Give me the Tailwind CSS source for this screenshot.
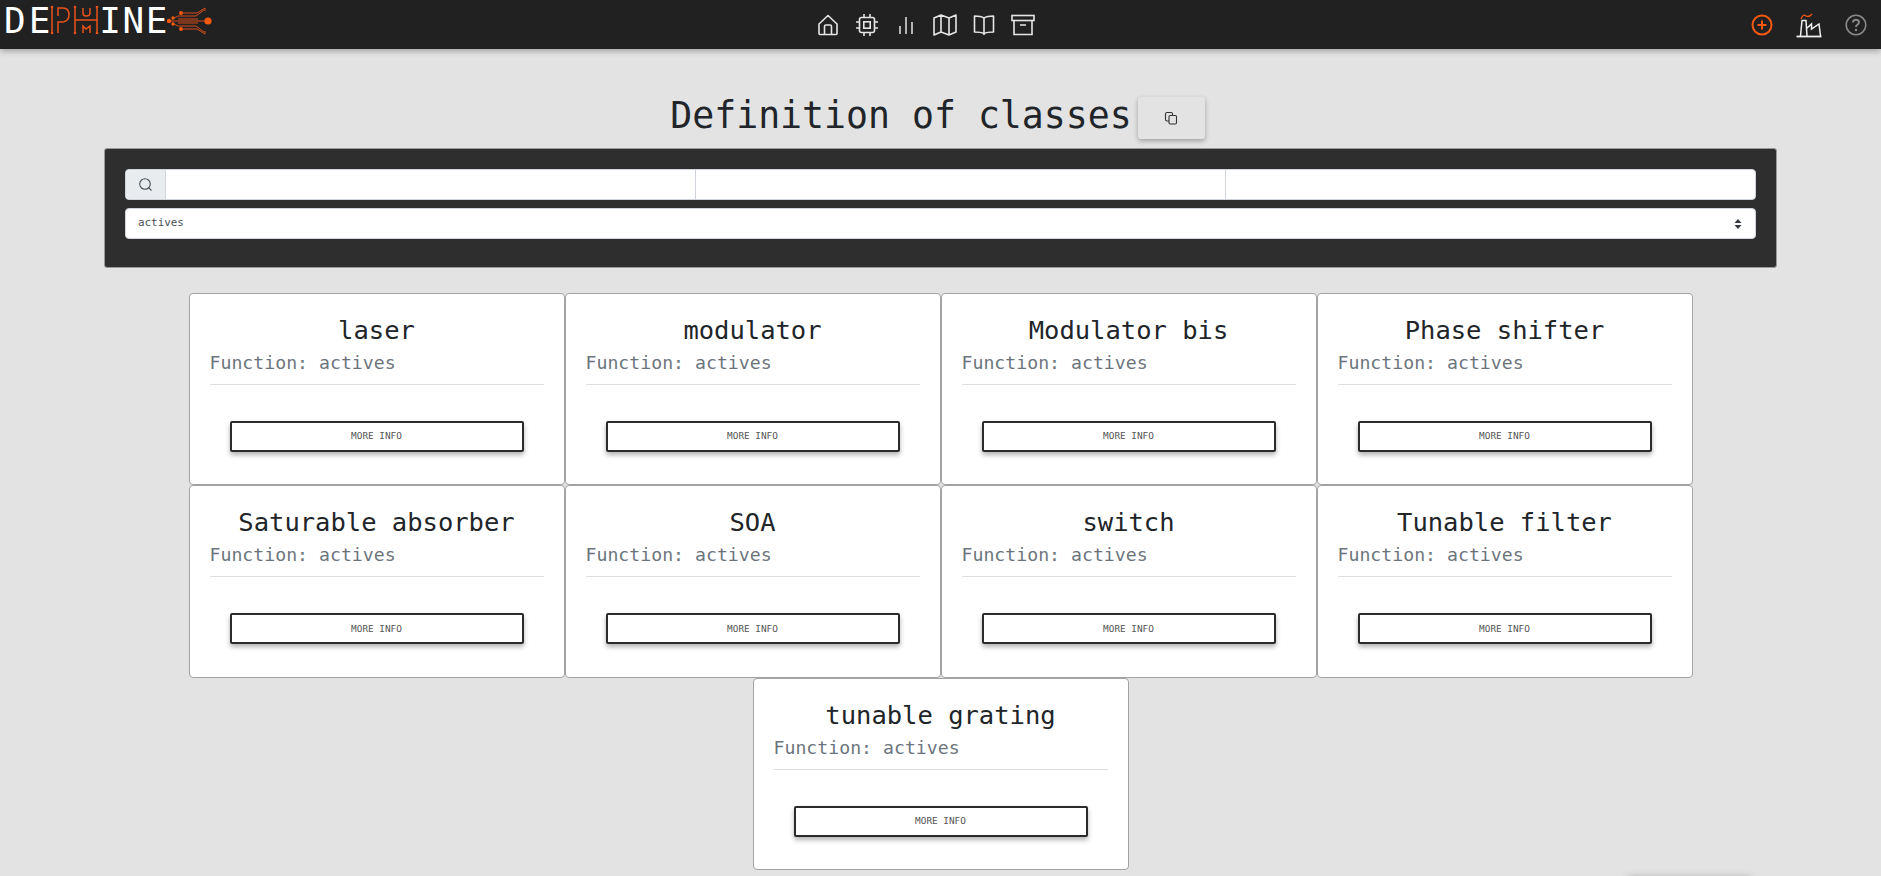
<!DOCTYPE html>
<html lang="en">
<head>
    <meta charset="UTF-8">
    <meta name="viewport" content="width=device-width, initial-scale=1.0">
    <title>Definition of classes</title>
    <script src="https://cdn.jsdelivr.net/npm/@tailwindcss/browser@4"></script>
</head>
<body class="bg-[#e3e3e3] font-['DejaVu_Sans_Mono',monospace] text-[#212529]">
<div class="relative h-[876px] overflow-hidden">
    <!-- top bar -->
    <header class="relative z-10 flex h-[49px] items-center bg-[#212121] shadow-[0_2px_6px_rgba(0,0,0,0.3)]">
        <div class="flex h-full w-[808px] shrink-0 items-start">
            <svg class="absolute left-0 top-0" width="215" height="45" viewBox="0 0 215 45" fill="none" stroke="#e8521a" stroke-width="1.2">
                <!-- P H M mark -->
                <path d="M52 7V33M58 33V22H63Q69 21 69 15Q69 8 63 8H58V16M75 7V33M97 7V33M75 20H97M83 8V13Q83 16 86 16Q90 16 90 13V8M83 33V26L86 29L90 26V33" stroke-width="1.5"/>
                <g fill="#e8521a" stroke="none">
                    <circle cx="52" cy="7" r="1.3"/><circle cx="52" cy="33" r="1.3"/><circle cx="75" cy="7" r="1.3"/><circle cx="75" cy="33" r="1.3"/><circle cx="97" cy="7" r="1.3"/><circle cx="97" cy="33" r="1.3"/>
                </g>
                <!-- circuit -->
                <path d="M170 21H206M172 19L178 16H196L204 10M182 13H197L205 8V11M172 23L178 26H196L204 32M182 29H197L205 34V31M178 19H198M178 23H198" stroke-width="0.9"/>
                <g fill="#f4590f" stroke="none">
                    <circle cx="169" cy="21" r="2.2"/><circle cx="173" cy="18" r="1.7"/><circle cx="173" cy="24" r="1.7"/><circle cx="181" cy="13" r="2"/><circle cx="181" cy="29" r="2"/><circle cx="208" cy="21" r="3.6"/>
                </g>
            </svg>
            <span class="ml-[4px] mt-[-1px] text-[36px] leading-[43px] tracking-[3px] text-white">DE</span>
            <span class="ml-[46px] mt-[-1px] text-[36px] leading-[43px] tracking-[1.5px] text-white">INE</span>
        </div>
        <nav class="grid grid-cols-[repeat(6,39px)] items-center justify-items-center text-[#e6e6e6]">
            <svg width="20" height="22" viewBox="0 0 20 22" fill="none" stroke="currentColor" stroke-width="1.6" stroke-linejoin="round"><path d="M1 10L10 1.5L19 10V19.5Q19 20.5 18 20.5H2Q1 20.5 1 19.5ZM6.5 20.5V12.5Q6.5 11 8 11H12Q13.5 11 13.5 12.5V20.5"/></svg>
            <svg width="24" height="24" viewBox="0 0 24 24" fill="none" stroke="currentColor" stroke-width="1.6"><rect x="4.5" y="4.5" width="15" height="15" rx="2"/><rect x="8.8" y="8.8" width="6.4" height="6.4"/><path d="M9 1V4M15 1V4M9 20V23M15 20V23M1 9H4M1 15H4M20 9H23M20 15H23"/></svg>
            <svg width="16" height="20" viewBox="0 0 16 20" fill="none" stroke="#c4c4c4" stroke-width="1.8"><path d="M2 11V19M8 2V19M14 7V19"/></svg>
            <svg width="24" height="24" viewBox="0 0 24 24" fill="none" stroke="currentColor" stroke-width="1.6" stroke-linejoin="round"><path d="M1 5L8 2L16 5L23 2V19L16 22L8 19L1 22ZM8 2V19M16 5V22"/></svg>
            <svg width="22" height="22" viewBox="0 0 22 22" fill="none" stroke="currentColor" stroke-width="1.6" stroke-linejoin="round"><path d="M11 4Q8 2 1.5 2V18Q8 18 11 19.5Q14 18 20.5 18V2Q14 2 11 4ZM11 4V21"/></svg>
            <svg width="24" height="22" viewBox="0 0 24 22" fill="none" stroke="currentColor" stroke-width="1.6"><rect x="1" y="1.5" width="22" height="5"/><path d="M3 6.5V20.5H21V6.5M9 11H15" /></svg>
        </nav>
        <div class="ml-auto flex items-center gap-[23px] pr-[14px]">
            <svg width="22" height="22" viewBox="0 0 22 22" fill="none" stroke="#f4590f" stroke-width="2"><circle cx="11" cy="11" r="9.5"/><path d="M11 6.5V15.5M6.5 11H15.5"/></svg>
            <svg width="26" height="26" viewBox="0 0 26 26" fill="none" stroke="#efefef" stroke-width="1.5"><path d="M0.5 24.5H25.5" stroke-width="1.8"/><path d="M4.5 24L6 8.5H10L11 24M10 17L15.5 12V17L23 12L24.5 24"/><path d="M5 7Q7 1.5 10 4Q13 5.5 16 2" stroke="#f4590f" stroke-width="1.2"/></svg>
            <svg width="22" height="22" viewBox="0 0 22 22" fill="none" stroke="#8a8a8a" stroke-width="1.6"><circle cx="11" cy="11" r="9.8"/><path d="M8 8.5Q8 5.7 11 5.7Q14 5.7 14 8.3Q14 10 12.2 10.8Q11 11.4 11 13" stroke-width="1.9"/><circle cx="11" cy="16" r="1.2" fill="#8a8a8a" stroke="none"/></svg>
        </div>
    </header>

    <main class="flex flex-col items-center">
        <!-- heading -->
        <div class="mt-[48px] flex h-[42px] items-center gap-[6px] pr-[6px]">
            <h1 class="mt-[-5px] text-[36.5px] font-normal leading-[42px]">Definition of classes</h1>
            <button class="flex h-[42px] w-[67px] items-center justify-center rounded-[3px] bg-[#e3e3e3] shadow-[0_2px_5px_rgba(0,0,0,0.3)]">
                <svg width="14" height="14" viewBox="0 0 14 14" fill="none" stroke="#333" stroke-width="1.1"><rect x="5" y="4.5" width="7.5" height="8.5" rx="1.2"/><path d="M5 10H3Q1.5 10 1.5 8.5V3Q1.5 1.5 3 1.5H7Q8.5 1.5 8.5 3V4.5"/></svg>
            </button>
        </div>

        <!-- filters -->
        <section class="mt-[9px] h-[120px] w-[1673px] rounded-[3px] border border-[#9a9a9a] bg-[#2e2e2e] px-[20px] pt-[20px]">
            <div class="flex h-[31px] w-[1631px] overflow-hidden rounded-[4px] border border-[#ced4da] bg-white">
                <span class="flex w-[40px] shrink-0 items-center justify-center border-r border-[#ced4da] bg-[#e9ecef]">
                    <svg width="15" height="15" viewBox="0 0 15 15" fill="none" stroke="#495057" stroke-width="1.1"><circle cx="7" cy="7" r="5.3"/><path d="M10.8 10.8L13.5 13.5"/></svg>
                </span>
                <input type="text" class="w-[530px] border-r border-[#ced4da] outline-none">
                <input type="text" class="w-[530px] border-r border-[#ced4da] outline-none">
                <input type="text" class="min-w-0 flex-1 outline-none">
            </div>
            <div class="mt-[8px] flex h-[31px] w-[1631px] items-center justify-between rounded-[4px] border border-[#ced4da] bg-white pl-[12px] pr-[13px] text-[10.9px] text-[#495057]">
                <span>actives</span>
                <svg width="8" height="12" viewBox="0 0 8 12" fill="#343a40"><path d="M4 1L7.5 5H0.5ZM4 11L0.5 7H7.5Z"/></svg>
            </div>
        </section>

        <!-- class cards -->
        <div class="mt-[25px] flex w-[1504px] flex-wrap justify-center">

            <article class="h-[192.4px] w-[376px] rounded-[4px] border border-[#a3a3a3] bg-white px-[20px] pt-[19px]">
                <h2 class="text-center text-[25.5px] font-normal leading-[34px]">laser</h2>
                <p class="mt-[3px] h-[35px] border-b border-[#dedede] text-[18.2px] leading-[26px] text-[#6c757d]">Function: actives</p>
                <button class="mx-auto mt-[36px] flex h-[31px] w-[294px] items-center justify-center rounded-[2px] border-2 border-[#2b2b2b] bg-white text-[9.4px] text-[#555] shadow-[0_3px_5px_rgba(0,0,0,0.3)]">MORE INFO</button>
            </article>

            <article class="h-[192.4px] w-[376px] rounded-[4px] border border-[#a3a3a3] bg-white px-[20px] pt-[19px]">
                <h2 class="text-center text-[25.5px] font-normal leading-[34px]">modulator</h2>
                <p class="mt-[3px] h-[35px] border-b border-[#dedede] text-[18.2px] leading-[26px] text-[#6c757d]">Function: actives</p>
                <button class="mx-auto mt-[36px] flex h-[31px] w-[294px] items-center justify-center rounded-[2px] border-2 border-[#2b2b2b] bg-white text-[9.4px] text-[#555] shadow-[0_3px_5px_rgba(0,0,0,0.3)]">MORE INFO</button>
            </article>

            <article class="h-[192.4px] w-[376px] rounded-[4px] border border-[#a3a3a3] bg-white px-[20px] pt-[19px]">
                <h2 class="text-center text-[25.5px] font-normal leading-[34px]">Modulator bis</h2>
                <p class="mt-[3px] h-[35px] border-b border-[#dedede] text-[18.2px] leading-[26px] text-[#6c757d]">Function: actives</p>
                <button class="mx-auto mt-[36px] flex h-[31px] w-[294px] items-center justify-center rounded-[2px] border-2 border-[#2b2b2b] bg-white text-[9.4px] text-[#555] shadow-[0_3px_5px_rgba(0,0,0,0.3)]">MORE INFO</button>
            </article>

            <article class="h-[192.4px] w-[376px] rounded-[4px] border border-[#a3a3a3] bg-white px-[20px] pt-[19px]">
                <h2 class="text-center text-[25.5px] font-normal leading-[34px]">Phase shifter</h2>
                <p class="mt-[3px] h-[35px] border-b border-[#dedede] text-[18.2px] leading-[26px] text-[#6c757d]">Function: actives</p>
                <button class="mx-auto mt-[36px] flex h-[31px] w-[294px] items-center justify-center rounded-[2px] border-2 border-[#2b2b2b] bg-white text-[9.4px] text-[#555] shadow-[0_3px_5px_rgba(0,0,0,0.3)]">MORE INFO</button>
            </article>

            <article class="h-[192.4px] w-[376px] rounded-[4px] border border-[#a3a3a3] bg-white px-[20px] pt-[19px]">
                <h2 class="text-center text-[25.5px] font-normal leading-[34px]">Saturable absorber</h2>
                <p class="mt-[3px] h-[35px] border-b border-[#dedede] text-[18.2px] leading-[26px] text-[#6c757d]">Function: actives</p>
                <button class="mx-auto mt-[36px] flex h-[31px] w-[294px] items-center justify-center rounded-[2px] border-2 border-[#2b2b2b] bg-white text-[9.4px] text-[#555] shadow-[0_3px_5px_rgba(0,0,0,0.3)]">MORE INFO</button>
            </article>

            <article class="h-[192.4px] w-[376px] rounded-[4px] border border-[#a3a3a3] bg-white px-[20px] pt-[19px]">
                <h2 class="text-center text-[25.5px] font-normal leading-[34px]">SOA</h2>
                <p class="mt-[3px] h-[35px] border-b border-[#dedede] text-[18.2px] leading-[26px] text-[#6c757d]">Function: actives</p>
                <button class="mx-auto mt-[36px] flex h-[31px] w-[294px] items-center justify-center rounded-[2px] border-2 border-[#2b2b2b] bg-white text-[9.4px] text-[#555] shadow-[0_3px_5px_rgba(0,0,0,0.3)]">MORE INFO</button>
            </article>

            <article class="h-[192.4px] w-[376px] rounded-[4px] border border-[#a3a3a3] bg-white px-[20px] pt-[19px]">
                <h2 class="text-center text-[25.5px] font-normal leading-[34px]">switch</h2>
                <p class="mt-[3px] h-[35px] border-b border-[#dedede] text-[18.2px] leading-[26px] text-[#6c757d]">Function: actives</p>
                <button class="mx-auto mt-[36px] flex h-[31px] w-[294px] items-center justify-center rounded-[2px] border-2 border-[#2b2b2b] bg-white text-[9.4px] text-[#555] shadow-[0_3px_5px_rgba(0,0,0,0.3)]">MORE INFO</button>
            </article>

            <article class="h-[192.4px] w-[376px] rounded-[4px] border border-[#a3a3a3] bg-white px-[20px] pt-[19px]">
                <h2 class="text-center text-[25.5px] font-normal leading-[34px]">Tunable filter</h2>
                <p class="mt-[3px] h-[35px] border-b border-[#dedede] text-[18.2px] leading-[26px] text-[#6c757d]">Function: actives</p>
                <button class="mx-auto mt-[36px] flex h-[31px] w-[294px] items-center justify-center rounded-[2px] border-2 border-[#2b2b2b] bg-white text-[9.4px] text-[#555] shadow-[0_3px_5px_rgba(0,0,0,0.3)]">MORE INFO</button>
            </article>

            <article class="h-[192.4px] w-[376px] rounded-[4px] border border-[#a3a3a3] bg-white px-[20px] pt-[19px]">
                <h2 class="text-center text-[25.5px] font-normal leading-[34px]">tunable grating</h2>
                <p class="mt-[3px] h-[35px] border-b border-[#dedede] text-[18.2px] leading-[26px] text-[#6c757d]">Function: actives</p>
                <button class="mx-auto mt-[36px] flex h-[31px] w-[294px] items-center justify-center rounded-[2px] border-2 border-[#2b2b2b] bg-white text-[9.4px] text-[#555] shadow-[0_3px_5px_rgba(0,0,0,0.3)]">MORE INFO</button>
            </article>

        </div>
    </main>

    <!-- shadow of something just below the fold -->
    <div class="absolute left-[1628px] top-[878px] h-[40px] w-[122px] shadow-[0_0_8px_rgba(0,0,0,0.3)]"></div>
</div>
</body>
</html>
